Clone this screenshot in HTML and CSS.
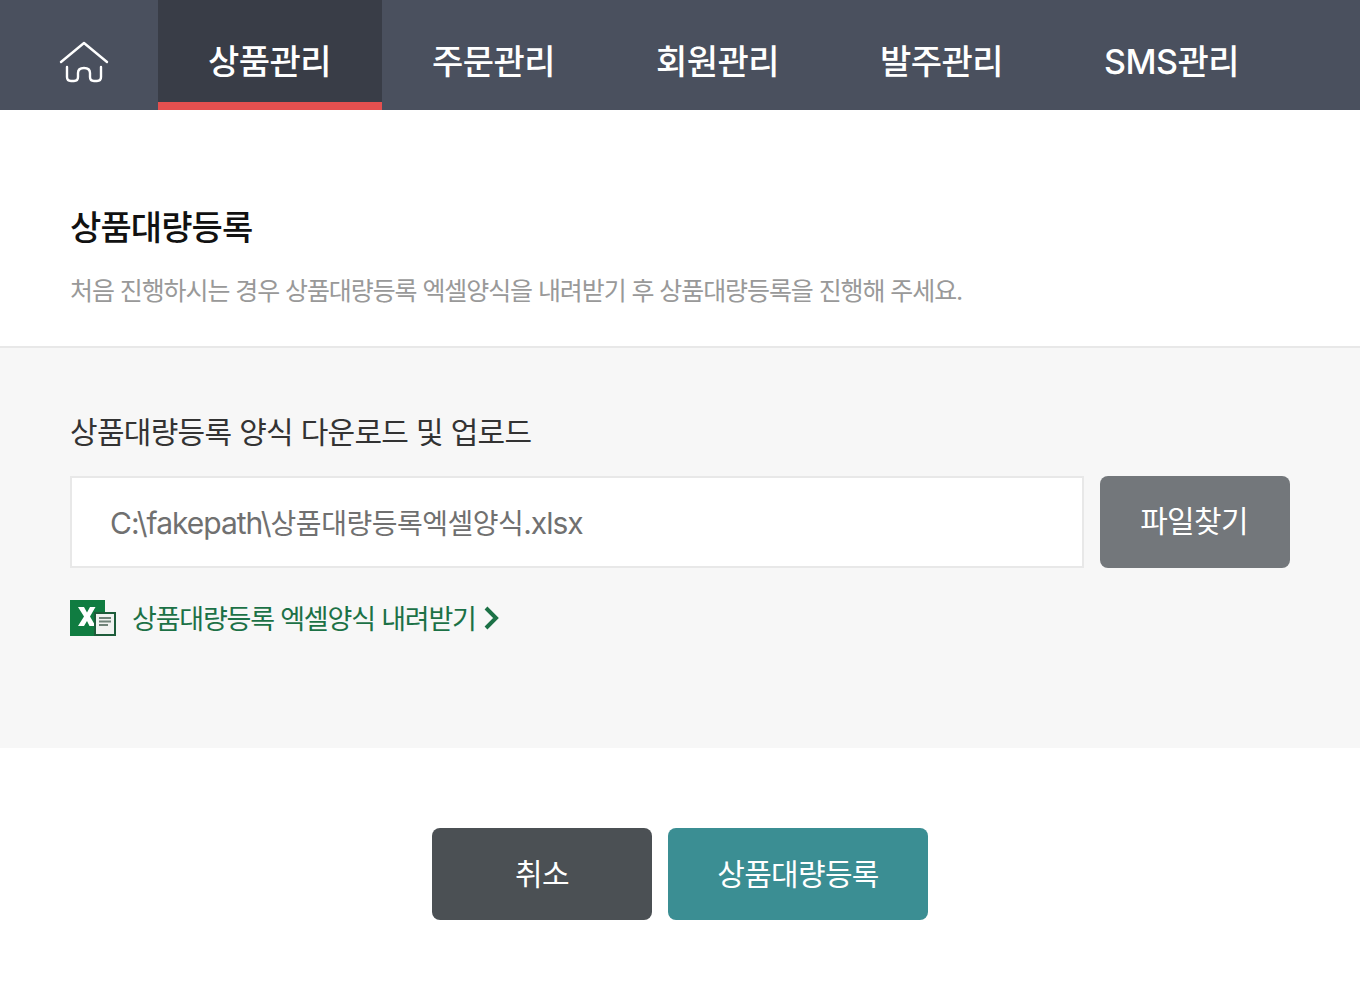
FILE: index.html
```html
<!DOCTYPE html>
<html lang="ko">

<head>
    <meta charset="UTF-8">
    <link rel="stylesheet" href="styles.css">
    <title>상품대량등록</title>
</head>

<body>
    <nav class="gnb">
        <a class="gnb-home" href="#">
            <svg width="50" height="44" viewBox="0 0 50 44" fill="none" stroke="#fff" stroke-width="2.4" stroke-linecap="round" stroke-linejoin="round">
                <path d="M2 21 L25 2 L48 21" />
                <path d="M8 26 V36 Q8 40 12 40 H15 Q19 40 19 36 V32 Q19 27 25 27 Q31 27 31 32 V36 Q31 40 35 40 H38 Q42 40 42 36 V26" />
            </svg>
        </a>
        <a class="gnb-item active" href="#">상품관리</a>
        <a class="gnb-item" href="#">주문관리</a>
        <a class="gnb-item" href="#">회원관리</a>
        <a class="gnb-item" href="#">발주관리</a>
        <a class="gnb-item" href="#">SMS관리</a>
    </nav>

    <section class="intro">
        <h1>상품대량등록</h1>
        <p>처음 진행하시는 경우 상품대량등록 엑셀양식을 내려받기 후 상품대량등록을 진행해 주세요.</p>
    </section>

    <section class="upload">
        <h2>상품대량등록 양식 다운로드 및 업로드</h2>
        <div class="file-row">
            <div class="file-input">C:\fakepath\<span class="file-name">상품대량등록엑셀양식</span>.xlsx</div>
            <button class="file-btn">파일찾기</button>
        </div>
        <a class="excel-link" href="#">
            <svg class="excel-icon" width="46" height="36" viewBox="0 0 46 36">
                <rect x="0" y="0" width="35" height="36" fill="#107c41" />
                <path d="M8 7 H14 L17 12.500 L20 7 H25.500 L20 16.500 L25.500 26 H19.500 L17 21 L14 26 H8 L14 16.500 Z" fill="#fff" />
                <rect x="24" y="12" width="22" height="24" fill="#1d5c3a" />
                <rect x="26" y="14" width="18" height="20" fill="#f1f3f1" />
                <path d="M29 18 H41 M29 21.500 H41 M29 25 H38" stroke="#6f8378" stroke-width="2" />
            </svg>
            <span>상품대량등록 엑셀양식 내려받기</span>
            <svg width="16" height="24" viewBox="0 0 16 24" fill="none" stroke="#1c7146" stroke-width="4">
                <path d="M2 2 L12 12 L2 22" />
            </svg>
        </a>
    </section>

    <div class="actions">
        <button class="btn btn-cancel">취소</button>
        <button class="btn btn-submit">상품대량등록</button>
    </div>
</body>

</html>
```

FILE: styles.css
```css
* {
    box-sizing: border-box;
}

body {
    margin: 0;
    font-family: Inter, "Noto Sans CJK KR", sans-serif;
    background-color: #fff;
    color: #222;
}

a {
    text-decoration: none;
}

.gnb {
    display: flex;
    height: 110px;
    background-color: #4a505e;
}

.gnb-home {
    display: flex;
    justify-content: center;
    align-items: center;
    width: 158px;
    padding: 16px 0 0 10px;
}

.gnb-item {
    display: flex;
    align-items: center;
    min-width: 224px;
    padding: 8px 50px 0;
    font-size: 34px;
    font-weight: 500;
    letter-spacing: -0.500px;
    color: #fff;
}

.gnb-item.active {
    background-color: #393d47;
    border-bottom: 8px solid #e5504f;
    padding-top: 16px;
}

.intro {
    height: 238px;
    padding: 93px 70px 0;
    border-bottom: 2px solid #e8e8e8;
}

.intro h1 {
    margin: 0;
    font-size: 34px;
    line-height: 50px;
    font-weight: 500;
    letter-spacing: -0.900px;
    color: #111;
}

.intro p {
    margin: 20px 0 0;
    font-size: 25px;
    line-height: 36px;
    letter-spacing: -1.090px;
    color: #999;
}

.upload {
    height: 400px;
    padding: 61px 70px 0;
    background-color: #f7f7f7;
}

.upload h2 {
    margin: 0;
    font-size: 30px;
    line-height: 46px;
    font-weight: 400;
    letter-spacing: -0.700px;
    color: #333;
}

.file-row {
    display: flex;
    gap: 16px;
    margin-top: 21px;
}

.file-input {
    flex: 1;
    height: 92px;
    padding: 0 38px;
    border: 2px solid #e8e8e8;
    background-color: #fff;
    font-size: 30px;
    line-height: 90px;
    letter-spacing: -1px;
    color: #707070;
}

.file-name {
    font-size: 28px;
    letter-spacing: -0.500px;
}

.file-btn {
    width: 190px;
    height: 92px;
    padding: 0 2px 6px 0;
    border: none;
    border-radius: 8px;
    background-color: #73777b;
    font-family: inherit;
    font-size: 30px;
    letter-spacing: -0.700px;
    color: #fff;
}

.excel-link {
    display: flex;
    align-items: center;
    margin-top: 30px;
    font-size: 27px;
    letter-spacing: -1.200px;
    color: #1c7146;
}

.excel-icon {
    margin-right: 16px;
}

.excel-link span {
    margin-right: 8px;
}

.actions {
    display: flex;
    justify-content: center;
    gap: 16px;
    padding-top: 80px;
}

.btn {
    height: 92px;
    padding-bottom: 5px;
    border: none;
    border-radius: 8px;
    font-family: inherit;
    font-size: 30px;
    letter-spacing: -0.700px;
    color: #fff;
}

.btn-cancel {
    width: 220px;
    background-color: #4b5054;
}

.btn-submit {
    width: 260px;
    background-color: #3b8e93;
}
```
